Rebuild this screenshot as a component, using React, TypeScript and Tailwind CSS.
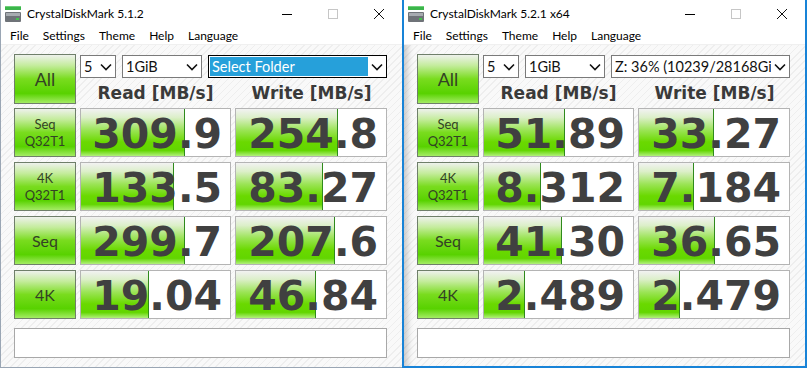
import React from "react";

interface Row {
  label: string[];
  big?: boolean;
  read: string;
  readBar: number;
  write: string;
  writeBar: number;
}

interface WinProps {
  title: string;
  drive: string;
  driveSelected?: boolean;
  active?: boolean;
  rows: Row[];
}

const uiFont = "font-['Lato','Noto_Sans',sans-serif]";
const numFont = "font-['DejaVu_Sans','Verdana',sans-serif]";

function AppIcon() {
  return (
    <svg width="16" height="16" viewBox="0 0 16 16" className="shrink-0">
      <rect x="0" y="0" width="16" height="4" fill="#3bb54a" />
      <rect x="0" y="0" width="16" height="1" fill="#6fd07a" />
      <rect x="0" y="6" width="16" height="10" rx="1" fill="#6f7378" />
      <rect x="1" y="7" width="14" height="3" fill="#a7abb0" />
      <rect x="11" y="12" width="3" height="2" fill="#45c24f" />
    </svg>
  );
}

function Chevron() {
  return (
    <svg width="12" height="8" viewBox="0 0 12 8" className="shrink-0">
      <path d="M1 1.5 L6 6.5 L11 1.5" fill="none" stroke="#111" strokeWidth="1.6" />
    </svg>
  );
}

function Select({ text, width, selected }: { text: string; width?: string; selected?: boolean }) {
  return (
    <div
      className={`${width ?? "flex-1 min-w-0"} h-[23px] flex items-center bg-white border ${
        selected ? "border-black" : "border-[#7a7a7a]"
      } text-[14.5px] text-[#111] ${uiFont}`}
    >
      <div
        className={`flex-1 min-w-0 h-[19px] ml-[1px] flex items-center pl-[2px] overflow-hidden whitespace-nowrap ${
          selected ? "bg-[#26a0da] text-white" : ""
        }`}
      >
        {text}
      </div>
      <div className="w-[18px] flex justify-center">
        <Chevron />
      </div>
    </div>
  );
}

const greenBtn =
  "bg-[linear-gradient(to_bottom,#eef1ec_0%,#c4ec9c_22%,#79dc1e_50%,#58d200_80%,#a4ec64_100%)] border border-[#6f7f6a]";

function TestButton({ label, big }: { label: string[]; big?: boolean }) {
  return (
    <div
      className={`${greenBtn} flex flex-col items-center justify-center text-[#334225] ${uiFont} ${
        big ? "text-[16px]" : "text-[13px] leading-[17px]"
      }`}
    >
      {label.map((l) => (
        <span key={l}>{l}</span>
      ))}
    </div>
  );
}

function ValueCell({ value, bar }: { value: string; bar: number }) {
  return (
    <div className="relative bg-white border border-[#b4b4b4] overflow-hidden flex items-center justify-end pr-[8px] pt-[3px]">
      <div
        className="absolute left-0 top-0 bottom-0 border-r border-[#2f8a1c] bg-[linear-gradient(to_bottom,#f2f2f2_0%,#dcefc9_18%,#9be456_45%,#6ad900_70%,#62d600_88%,#b2f07c_100%)]"
        style={{ width: bar }}
      />
      <span className={`relative text-[41px] leading-none font-bold text-[#404040] ${numFont}`}>{value}</span>
    </div>
  );
}

function TitleBar({ title }: { title: string }) {
  return (
    <div className="h-[28px] flex items-center bg-white">
      <div className="pl-[4px] pr-[6px]">
        <AppIcon />
      </div>
      <span className={`flex-1 text-[12px] text-black ${uiFont}`}>{title}</span>
      <div className="w-[46px] h-full flex items-center justify-center">
        <div className="w-[10px] h-px bg-black" />
      </div>
      <div className="w-[46px] h-full flex items-center justify-center">
        <div className="w-[10px] h-[10px] border border-[#c6c6c6]" />
      </div>
      <div className="w-[46px] h-full flex items-center justify-center">
        <svg width="12" height="12" viewBox="0 0 12 12">
          <path d="M1 1 L11 11 M11 1 L1 11" stroke="#111" strokeWidth="1" />
        </svg>
      </div>
    </div>
  );
}

function Window({ title, drive, driveSelected, active, rows }: WinProps) {
  return (
    <div
      className={`flex flex-col h-full ${
        active
          ? "flex-1 border-l-2 border-r-2 border-b-2 border-[#1883d7]"
          : "w-[402px] border-l border-b border-[#9aa6b4]"
      }`}
    >
      <TitleBar title={title} />
      <div className={`h-[16px] flex items-center bg-white text-[12px] text-black ${uiFont} pl-[2px]`}>
        {["File", "Settings", "Theme", "Help", "Language"].map((m) => (
          <span key={m} className="px-[7px]">
            {m}
          </span>
        ))}
      </div>
      <div
        className={`flex-1 flex flex-col border-t border-[#f0f0f0] pt-[9px] pl-[13px] bg-[repeating-linear-gradient(135deg,#f9f9f9_0px,#f9f9f9_4px,#eeeeee_4px,#eeeeee_5px)] ${
          active ? "shadow-[inset_9px_0_7px_-6px_rgba(0,0,0,0.22)]" : ""
        }`}
      >
        <div className="flex h-[50px] gap-[4px]">
          <div className={`${greenBtn} w-[62px] flex items-center justify-center text-[18px] text-[#334225] ${uiFont}`}>
            All
          </div>
          <div className="w-[307px] flex flex-col">
            <div className="flex gap-[6px] pt-[1px]">
              <Select text="5" width="w-[36px]" />
              <Select text="1GiB" width="w-[80px]" />
              <Select text={drive} selected={driveSelected} />
            </div>
            <div className={`flex-1 grid grid-cols-2 gap-[5px] items-end text-[17px] font-bold text-[#3a3a3a] ${numFont}`}>
              <span className="text-center leading-[22px]">Read [MB/s]</span>
              <span className="text-center leading-[22px]">Write [MB/s]</span>
            </div>
          </div>
        </div>
        <div className="mt-[4px] grid grid-cols-[62px_151px_152px] auto-rows-[49px] gap-x-[4px] gap-y-[5px]">
          {rows.map((r) => (
            <React.Fragment key={r.read}>
              <TestButton label={r.label} big={r.big} />
              <ValueCell value={r.read} bar={r.readBar} />
              <ValueCell value={r.write} bar={r.writeBar} />
            </React.Fragment>
          ))}
        </div>
        <div className="mt-[9px] w-[373px] h-[30px] bg-white border border-[#a8a8a8]" />
      </div>
    </div>
  );
}

const leftRows: Row[] = [
  { label: ["Seq", "Q32T1"], read: "309.9", readBar: 104, write: "254.8", writeBar: 102 },
  { label: ["4K", "Q32T1"], read: "133.5", readBar: 93, write: "83.27", writeBar: 87 },
  { label: ["Seq"], big: true, read: "299.7", readBar: 104, write: "207.6", writeBar: 99 },
  { label: ["4K"], big: true, read: "19.04", readBar: 68, write: "46.84", writeBar: 80 },
];

const rightRows: Row[] = [
  { label: ["Seq", "Q32T1"], read: "51.89", readBar: 81, write: "33.27", writeBar: 75 },
  { label: ["4K", "Q32T1"], read: "8.312", readBar: 57, write: "7.184", writeBar: 55 },
  { label: ["Seq"], big: true, read: "41.30", readBar: 78, write: "36.65", writeBar: 76 },
  { label: ["4K"], big: true, read: "2.489", readBar: 41, write: "2.479", writeBar: 41 },
];

export default function App() {
  return (
    <div className="w-[807px] h-[368px] flex bg-white overflow-hidden">
      <Window title="CrystalDiskMark 5.1.2" drive="Select Folder" driveSelected rows={leftRows} />
      <Window title="CrystalDiskMark 5.2.1 x64" drive="Z: 36% (10239/28168GiB)" active rows={rightRows} />
    </div>
  );
}
